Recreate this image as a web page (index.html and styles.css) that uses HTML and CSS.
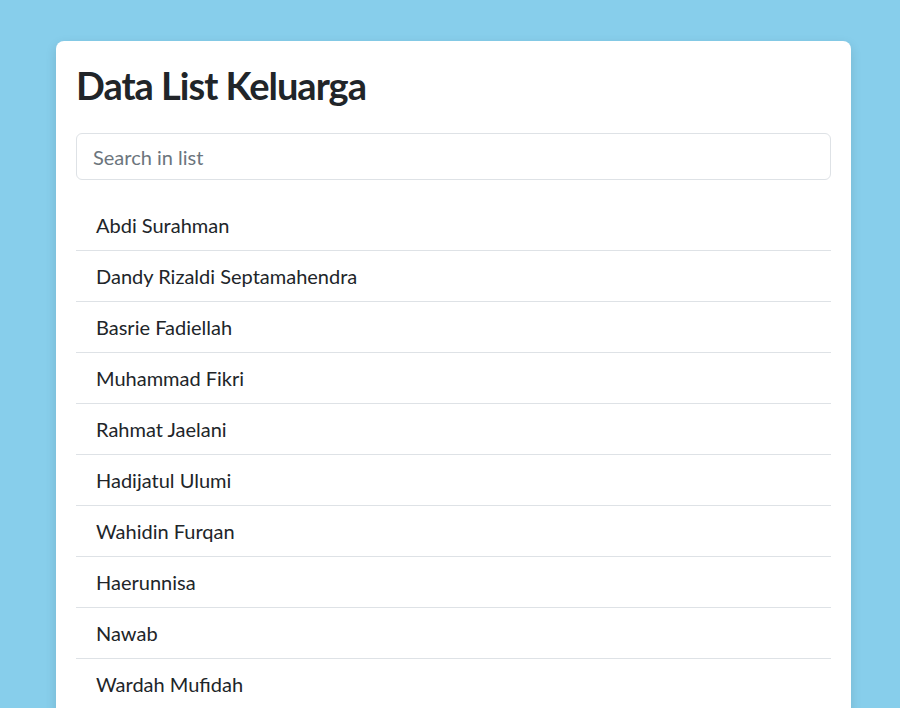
FILE: index.html
```html
<!DOCTYPE html>
<html lang="id">
<head>
<meta charset="utf-8">
<title>Data List Keluarga</title>
<link rel="stylesheet" href="styles.css">
</head>
<body>
<main class="page">
  <section class="card">
    <h1 class="title">Data List Keluarga</h1>
    <input class="search" type="text" placeholder="Search in list">
    <ul class="list">
      <li class="item">Abdi Surahman</li>
      <li class="item">Dandy Rizaldi Septamahendra</li>
      <li class="item">Basrie Fadiellah</li>
      <li class="item">Muhammad Fikri</li>
      <li class="item">Rahmat Jaelani</li>
      <li class="item">Hadijatul Ulumi</li>
      <li class="item">Wahidin Furqan</li>
      <li class="item">Haerunnisa</li>
      <li class="item">Nawab</li>
      <li class="item">Wardah Mufidah</li>
    </ul>
  </section>
</main>
</body>
</html>
```
FILE: styles.css
```css
html, body {
  margin: 0;
  padding: 0;
}
body {
  background: #87ceeb;
  font-family: Lato, "Noto Sans", sans-serif;
  color: #212529;
  overflow: hidden;
}
.page {
  padding: 41px 0 0 56px;
}
.card {
  width: 795px;
  box-sizing: border-box;
  background: #fff;
  border-radius: 8px;
  box-shadow: 0 4px 12px rgba(0, 0, 0, 0.12);
  padding: 20px;
}
.title {
  margin: 0 0 24px;
  font-size: 38px;
  line-height: 48px;
  font-weight: 700;
  letter-spacing: -1px;
}
.search {
  display: block;
  width: 100%;
  box-sizing: border-box;
  height: 47px;
  padding: 8px 16px;
  font: inherit;
  font-size: 20px;
  line-height: 30px;
  color: #212529;
  border: 1px solid #dee2e6;
  border-radius: 6px;
  outline: none;
  margin: 0 0 20px;
}
.search::placeholder {
  color: #6c757d;
}
.list {
  list-style: none;
  margin: 0;
  padding: 0;
}
.item {
  padding: 10px 20px;
  font-size: 20px;
  line-height: 30px;
  border-bottom: 1px solid #dee2e6;
}
```
